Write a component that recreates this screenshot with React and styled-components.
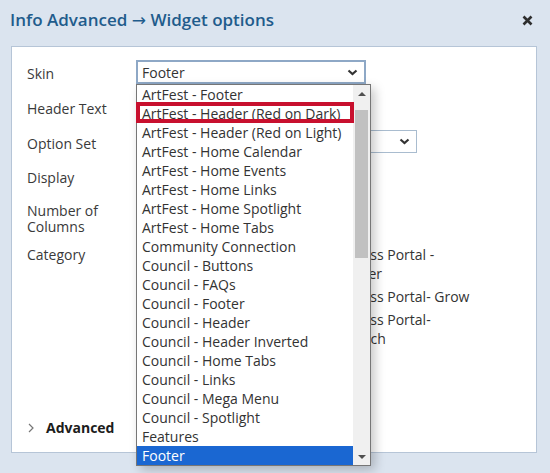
import React from "react";
import styled, { createGlobalStyle } from "styled-components";

const GlobalStyle = createGlobalStyle`
  html, body {
    margin: 0;
    padding: 0;
    background: #dbe4ef;
  }
  body {
    font-family: "Open Sans", "Liberation Sans", sans-serif;
    width: 550px;
    height: 473px;
    overflow: hidden;
  }
`;

const Page = styled.div`
  display: flex;
  flex-direction: column;
  height: 473px;
`;

const Header = styled.div`
  display: flex;
  align-items: center;
  justify-content: space-between;
  height: 40px;
  padding: 0 17px 0 10px;
`;

const Title = styled.h1`
  margin: 0;
  font-size: 17px;
  font-weight: 600;
  line-height: 22px;
  color: #1f5c8c;
`;

const Arrow = styled.span`
  font-family: "DejaVu Sans", sans-serif;
  font-weight: 400;
  font-size: 17px;
`;

const CloseButton = styled.button`
  display: flex;
  align-items: center;
  justify-content: center;
  width: 11px;
  height: 11px;
  padding: 0;
  border: none;
  background: none;
  color: #2e2e2e;
  cursor: pointer;
`;

const Panel = styled.div`
  display: flex;
  flex-direction: column;
  height: 407px;
  margin: 6px 13px 0 11px;
  padding: 13px 0 0 15px;
  box-sizing: border-box;
  background: #fff;
  border: 1px solid #b6c5d7;
`;

const Form = styled.div`
  display: grid;
  grid-template-columns: 109px 1fr;
  row-gap: 11px;
  align-items: start;
`;

const Label = styled.div`
  font-size: 14px;
  line-height: 16px;
  padding-top: ${(p) => (p.$top != null ? p.$top : 6)}px;
  height: ${(p) => (p.$height ? `${p.$height}px` : "auto")};
  box-sizing: border-box;
  color: #3a3a3a;
`;

const Field = styled.div`
  position: relative;
  width: ${(p) => p.$width}px;
`;

const SelectBox = styled.div`
  display: flex;
  align-items: center;
  justify-content: space-between;
  height: ${(p) => (p.$focused ? 24 : 23)}px;
  padding: 0 6px 0 ${(p) => (p.$focused ? 4 : 5)}px;
  box-sizing: border-box;
  border: ${(p) => (p.$focused ? "2px solid #8ea8c6" : "1px solid #a9bccf")};
  background: #fff;
  font-size: 14px;
  color: #333;
`;

const TextInput = styled.div`
  height: 24px;
  box-sizing: border-box;
  border: 1px solid #a9bccf;
  background: #fff;
`;

const Chevron = () => (
  <svg width="11" height="7" viewBox="0 0 11 7">
    <polyline
      points="1.5,1.5 5.5,5 9.5,1.5"
      fill="none"
      stroke="#333"
      strokeWidth="2.2"
    />
  </svg>
);

const ListBox = styled.div`
  position: absolute;
  top: 100%;
  left: 0;
  z-index: 10;
  display: flex;
  width: 235px;
  height: 382px;
  box-sizing: border-box;
  border: 1px solid #767676;
  background: #fff;
  box-shadow: 4px 4px 10px rgba(0, 0, 0, 0.22);
`;

const Options = styled.div`
  position: relative;
  flex: 1;
`;

const Option = styled.div`
  height: 19px;
  line-height: 19px;
  padding-left: 5px;
  font-size: 14px;
  white-space: nowrap;
  color: ${(p) => (p.$selected ? "#fff" : "#333")};
  background: ${(p) => (p.$selected ? "#1a67d2" : "transparent")};
`;

const Highlight = styled.div`
  position: absolute;
  top: 17px;
  left: -1px;
  width: 218px;
  height: 21px;
  box-sizing: border-box;
  border: 4px solid #c8102e;
  pointer-events: none;
`;

const Scrollbar = styled.div`
  display: flex;
  flex-direction: column;
  width: 17px;
  background: #f0f0f0;
`;

const ScrollArrow = styled.div`
  display: flex;
  align-items: center;
  justify-content: center;
  height: 17px;
  &::after {
    content: "";
    border-left: 4px solid transparent;
    border-right: 4px solid transparent;
    ${(p) =>
      p.$down
        ? "border-top: 4px solid #505050;"
        : "border-bottom: 4px solid #505050;"}
  }
`;

const Thumb = styled.div`
  width: 13px;
  height: 148px;
  margin: 8px 0 0 2px;
  background: #c1c1c1;
`;

const Track = styled.div`
  flex: 1;
`;

const CategoryGrid = styled.div`
  display: grid;
  grid-template-columns: 170px 1fr;
  margin-top: 1px;
`;

const CheckColumn = styled.div`
  display: flex;
  flex-direction: column;
  gap: 4px;
`;

const CheckItem = styled.label`
  display: flex;
  align-items: flex-start;
  gap: 7px;
`;

const CheckBox = styled.span`
  flex: none;
  width: 13px;
  height: 13px;
  margin-top: 3px;
  box-sizing: border-box;
  border: 1px solid #767676;
  border-radius: 2px;
  background: #fff;
`;

const CheckText = styled.span`
  width: 150px;
  font-size: 14px;
  line-height: 19px;
  color: #333;
`;

const AdvancedRow = styled.div`
  display: flex;
  align-items: center;
  gap: 12px;
  margin-top: auto;
  padding: 0 0 15px 1px;
  font-size: 14px;
  font-weight: 700;
  line-height: 18px;
  color: #1c1c1c;
`;

const skins = [
  "ArtFest - Footer",
  "ArtFest - Header (Red on Dark)",
  "ArtFest - Header (Red on Light)",
  "ArtFest - Home Calendar",
  "ArtFest - Home Events",
  "ArtFest - Home Links",
  "ArtFest - Home Spotlight",
  "ArtFest - Home Tabs",
  "Community Connection",
  "Council - Buttons",
  "Council - FAQs",
  "Council - Footer",
  "Council - Header",
  "Council - Header Inverted",
  "Council - Home Tabs",
  "Council - Links",
  "Council - Mega Menu",
  "Council - Spotlight",
  "Features",
  "Footer",
];

const rightCategories = [
  "Business Portal - Discover",
  "Business Portal- Grow",
  "Business Portal- Research",
];

export default function App() {
  return (
    <Page>
      <GlobalStyle />
      <Header>
        <Title>
          Info Advanced <Arrow>→</Arrow> Widget options
        </Title>
        <CloseButton aria-label="Close">
          <svg width="11" height="11" viewBox="0 0 11 11">
            <path
              d="M1.5 1.5 L9.5 9.5 M9.5 1.5 L1.5 9.5"
              stroke="currentColor"
              strokeWidth="2.6"
            />
          </svg>
        </CloseButton>
      </Header>

      <Panel>
        <Form>
          <Label>Skin</Label>
          <Field $width={230}>
            <SelectBox $focused>
              <span>Footer</span>
              <Chevron />
            </SelectBox>
            <ListBox>
              <Options>
                {skins.map((s) => (
                  <Option key={s} $selected={s === "Footer"}>
                    {s}
                  </Option>
                ))}
                <Highlight />
              </Options>
              <Scrollbar>
                <ScrollArrow />
                <Thumb />
                <Track />
                <ScrollArrow $down />
              </Scrollbar>
            </ListBox>
          </Field>

          <Label>Header Text</Label>
          <Field $width={230}>
            <TextInput />
          </Field>

          <Label>Option Set</Label>
          <Field $width={281}>
            <SelectBox>
              <span />
              <Chevron />
            </SelectBox>
          </Field>

          <Label>Display</Label>
          <Field $width={200}>
            <SelectBox>
              <span />
              <Chevron />
            </SelectBox>
          </Field>

          <Label $top={5} $height={35}>
            Number of
            <br />
            Columns
          </Label>
          <Field $width={80}>
            <TextInput />
          </Field>

          <Label $top={3}>Category</Label>
          <CategoryGrid>
            <CheckColumn />
            <CheckColumn>
              {rightCategories.map((c) => (
                <CheckItem key={c}>
                  <CheckBox />
                  <CheckText>{c}</CheckText>
                </CheckItem>
              ))}
            </CheckColumn>
          </CategoryGrid>
        </Form>

        <AdvancedRow>
          <svg width="6" height="10" viewBox="0 0 6 10">
            <polyline
              points="1,1 5,5 1,9"
              fill="none"
              stroke="#777"
              strokeWidth="1.2"
            />
          </svg>
          <span>Advanced</span>
        </AdvancedRow>
      </Panel>
    </Page>
  );
}
